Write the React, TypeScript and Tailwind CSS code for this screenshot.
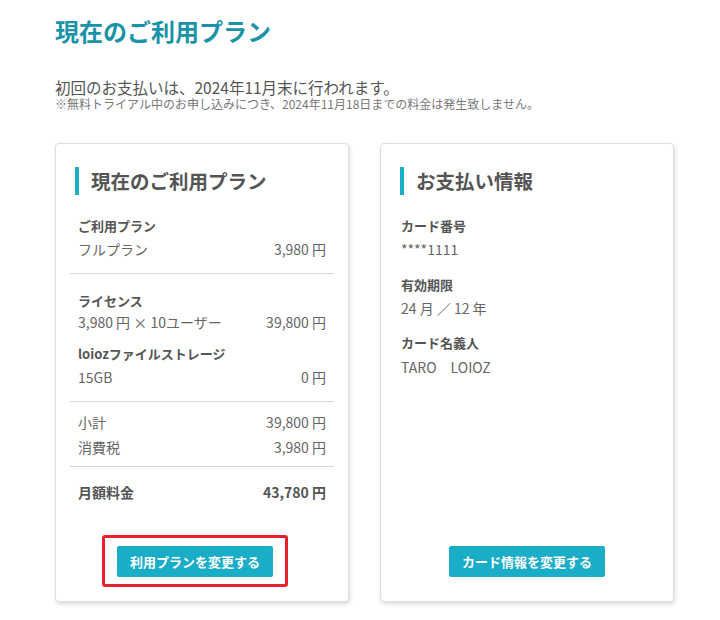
import React from "react";

const FONT = { fontFamily: '"Noto Sans CJK JP", "Noto Sans", sans-serif' };

function CardHeading({ title }: { title: string }) {
  return (
    <div className="px-[19px] pt-[23px]">
      <div className="h-[28px] flex items-center border-l-4 border-[#1aadc8] pl-[12px]">
        <h2 className="text-[19.5px] font-bold text-[#555] leading-none">{title}</h2>
      </div>
    </div>
  );
}

function Line({
  left,
  right,
  bold,
  className = "",
}: {
  left: string;
  right?: string;
  bold?: boolean;
  className?: string;
}) {
  return (
    <div
      className={`flex justify-between leading-[22px] ${
        bold ? "text-[13px] font-bold text-[#555]" : "text-[14px] text-[#666]"
      } ${className}`}
    >
      <span>{left}</span>
      {right && <span>{right}</span>}
    </div>
  );
}

function PlanCard() {
  return (
    <div className="w-[294px] h-[459px] bg-white border border-[#dedede] rounded-[4px] shadow-[1px_2px_4px_rgba(0,0,0,0.15)] flex flex-col">
      <CardHeading title="現在のご利用プラン" />

      <div className="px-[14px] mt-[20px]">
        {/* plan */}
        <div className="px-[8px] pb-[13px] border-b border-[#d6d6d6]">
          <Line left="ご利用プラン" bold />
          <Line left="フルプラン" right="3,980 円" className="mt-[1px]" />
        </div>

        {/* license + storage */}
        <div className="px-[8px] pt-[16px] pb-[13px] border-b border-[#d6d6d6]">
          <Line left="ライセンス" bold />
          <Line left="3,980 円 × 10ユーザー" right="39,800 円" className="-mt-[1px]" />
          <Line left="loiozファイルストレージ" bold className="mt-[10px]" />
          <Line left="15GB" right="0 円" className="mt-[1px]" />
        </div>

        {/* subtotal */}
        <div className="px-[8px] pt-[9px] pb-[8px] border-b border-[#d6d6d6]">
          <Line left="小計" right="39,800 円" />
          <Line left="消費税" right="3,980 円" className="mt-[3px]" />
        </div>

        {/* total */}
        <div className="px-[8px] pt-[14px] flex justify-between leading-[22px] text-[14px] font-bold text-[#555]">
          <span>月額料金</span>
          <span>43,780 円</span>
        </div>
      </div>

      <div className="mt-auto pb-[14px] flex justify-center pr-[14px]">
        <div className="border-[3px] border-[#e8212b] rounded-[3px] px-[12px] pt-[8px] pb-[7px]">
          <button className="h-[31px] px-[13px] bg-[#1aadc8] rounded-[2px] text-white text-[13px] font-bold">
            利用プランを変更する
          </button>
        </div>
      </div>
    </div>
  );
}

function PaymentCard() {
  return (
    <div className="w-[294px] h-[459px] bg-white border border-[#dedede] rounded-[4px] shadow-[1px_2px_4px_rgba(0,0,0,0.15)] flex flex-col">
      <CardHeading title="お支払い情報" />

      <div className="px-[20px] mt-[20px]">
        <Line left="カード番号" bold />
        <Line left="****1111" className="mt-[1px]" />
        <Line left="有効期限" bold className="mt-[14px]" />
        <Line left="24 月 ／ 12 年" className="mt-[1px]" />
        <Line left="カード名義人" bold className="mt-[13px]" />
        <Line left="TARO　LOIOZ" className="mt-[2px]" />
      </div>

      <div className="mt-auto pb-[24px] flex justify-center">
        <button className="h-[31px] px-[13px] bg-[#1aadc8] rounded-[2px] text-white text-[13px] font-bold">
          カード情報を変更する
        </button>
      </div>
    </div>
  );
}

export default function App() {
  return (
    <div className="w-[720px] h-[620px] bg-white pl-[55px] pt-[15px]" style={FONT}>
      <h1 className="text-[24px] leading-[32px] font-bold text-[#1a93a8]">現在のご利用プラン</h1>

      <p className="mt-[31px] text-[15.5px] leading-[18px] text-[#555]">
        初回のお支払いは、2024年11月末に行われます。
      </p>
      <p className="mt-[1px] text-[12px] leading-[14px] text-[#777]">
        ※無料トライアル中のお申し込みにつき、2024年11月18日までの料金は発生致しません。
      </p>

      <div className="mt-[32px] flex gap-[31px]">
        <PlanCard />
        <PaymentCard />
      </div>
    </div>
  );
}
